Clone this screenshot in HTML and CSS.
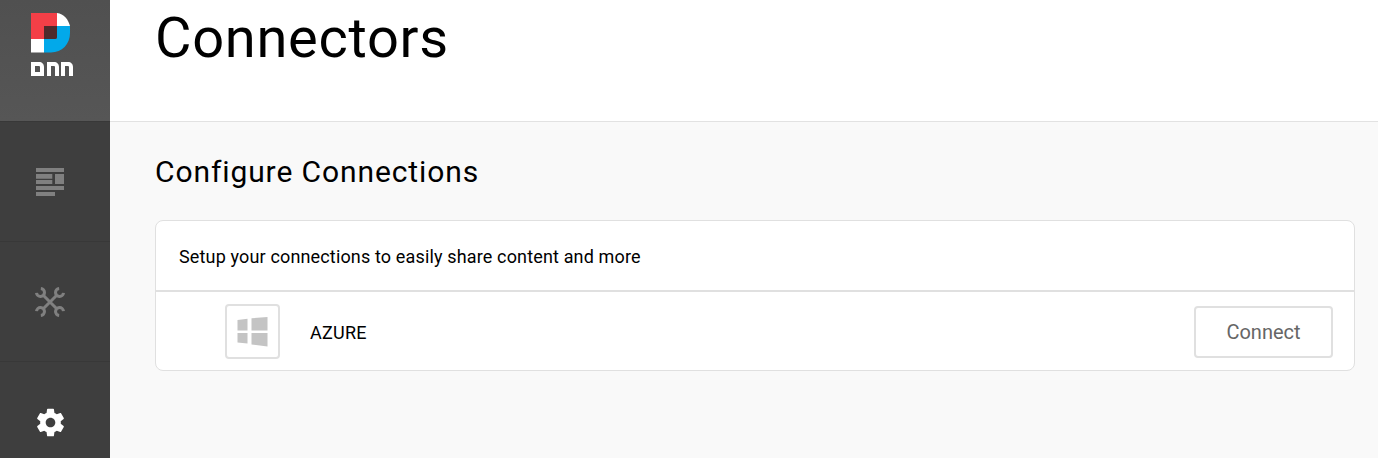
FILE: index.html
```html
<!DOCTYPE html>
<html lang="en">
<head>
<meta charset="utf-8">
<title>Connectors</title>
<link rel="stylesheet" href="styles.css">
</head>
<body>
<div class="app">
  <nav class="sidebar">
    <div class="logo">
      <svg class="logo-mark" width="39" height="40" viewBox="0 0 39 40">
        <path d="M0 0H26V13H13V26H0Z" fill="#f33f47"/>
        <path d="M26 0C33 1 37 6 39 13H26Z" fill="#fff"/>
        <path d="M0 26H13V39.5H0Z" fill="#fff"/>
        <path d="M13 39.5V26H24Q26 26 26 24V13H39V20C39 31 31 39.5 20 39.5Z" fill="#02a9ea"/>
        <path d="M13 13H26V24Q26 26 24 26H13Z" fill="#4e2a2c"/>
      </svg>
      <svg class="logo-word" width="42" height="14" viewBox="0 0 42 14">
        <path fill="#fff" fill-rule="evenodd" d="M0 0H8C11 0 13 2 13 5V14H0ZM4 4V10H9V5Q9 4 8 4Z"/>
        <path fill="#fff" d="M16 14V0H23C26 0 28 2 28 5V14H24V5Q24 4 23 4H20V14Z"/>
        <path fill="#fff" d="M30 14V0H37C40 0 42 2 42 5V14H38V5Q38 4 37 4H34V14Z"/>
      </svg>
    </div>
    <div class="nav-item">
      <svg width="28" height="28" viewBox="0 0 28 28" fill="#808080">
        <path d="M0 0H28V4H0ZM0 6H16.3V10.700H0ZM19 6H28V16H19ZM0 12H16.300V16H0ZM0 18H28V22H0ZM0 24H19V28H0Z"/>
      </svg>
    </div>
    <div class="nav-item">
      <svg width="30" height="30" viewBox="0 0 30 30" fill="none" stroke="#808080" stroke-width="3">
        <path d="M8 8L22 22M22 8L8 22"/>
        <path d="M1.5 5.85A4 4 0 1 0 5.85 1.5"/>
        <path d="M28.5 24.15A4 4 0 1 0 24.15 28.5"/>
        <path d="M24.15 1.5A4 4 0 1 0 28.5 5.85"/>
        <path d="M5.85 28.500A4 4 0 1 0 1.5 24.15"/>
      </svg>
    </div>
    <div class="nav-item nav-item-active">
      <svg width="33" height="33" viewBox="0 0 24 24" fill="#fff">
        <path fill-rule="evenodd" d="M19.43 12.98c.04-.32.07-.64.07-.98s-.03-.66-.07-.98l2.11-1.65c.19-.15.24-.42.12-.64l-2-3.46c-.12-.22-.39-.3-.61-.22l-2.49 1c-.52-.4-1.08-.73-1.69-.98l-.38-2.65C14.46 2.18 14.25 2 14 2h-4c-.25 0-.46.18-.49.42l-.38 2.65c-.61.25-1.17.59-1.69.98l-2.49-1c-.23-.09-.49 0-.61.22l-2 3.46c-.13.22-.07.49.12.64l2.11 1.65c-.04.32-.07.65-.07.98s.03.66.07.98l-2.11 1.65c-.19.15-.24.42-.12.64l2 3.46c.12.22.39.3.61.22l2.49-1c.52.4 1.08.73 1.69.98l.38 2.65c.03.24.24.42.49.42h4c.25 0 .46-.18.49-.42l.38-2.65c.61-.25 1.17-.59 1.69-.98l2.49 1c.23.09.49 0 .61-.22l2-3.46c.12-.22.07-.49-.12-.64l-2.11-1.65zM12 15.5c-1.93 0-3.5-1.57-3.5-3.5s1.57-3.5 3.5-3.5 3.5 1.57 3.5 3.5-1.57 3.5-3.5 3.5z"/>
      </svg>
    </div>
  </nav>
  <div class="main">
    <header class="page-header">
      <h1 class="page-title">Connectors</h1>
    </header>
    <section class="content">
      <h2 class="section-title">Configure Connections</h2>
      <div class="card">
        <div class="card-intro">Setup your connections to easily share content and more</div>
        <div class="connector">
          <div class="connector-icon">
            <svg width="32" height="30" viewBox="0 0 32 30" fill="#c4c4c4">
              <path d="M0.5 3L10.500 1.800V13.500H0.5ZM14.500 1.300L30.500 0V13.500H14.500ZM0.5 16H10.500V26.500L0.5 25.500ZM14.500 16H30.500V29.500L14.500 27.500Z"/>
            </svg>
          </div>
          <div class="connector-name">AZURE</div>
          <button class="connect-button">Connect</button>
        </div>
      </div>
    </section>
  </div>
</div>
</body>
</html>
```

FILE: styles.css
```css
* {
  box-sizing: border-box;
}

html,
body {
  margin: 0;
  height: 100%;
  overflow: hidden;
}

body {
  font-family: Roboto, "Liberation Sans", sans-serif;
  color: #000;
  background: #f9f9f9;
}

.app {
  display: flex;
  height: 458px;
}

.sidebar {
  flex: 0 0 110px;
  display: flex;
  flex-direction: column;
  background: #3e3e3e;
}

.logo {
  height: 122px;
  padding: 13px 0 0 31px;
  display: flex;
  flex-direction: column;
  align-items: flex-start;
  gap: 9px;
  background: linear-gradient(#505050, #565656);
  border-bottom: 1px solid #383838;
}

.nav-item {
  height: 120px;
  flex: none;
  display: flex;
  align-items: center;
  justify-content: center;
  padding-right: 10px;
  border-bottom: 1px solid #383838;
}

.nav-item-active {
  border-bottom: 0;
  flex: 1;
  height: auto;
  padding-top: 24px;
}

.main {
  flex: 1;
  display: flex;
  flex-direction: column;
  min-width: 0;
}

.page-header {
  height: 122px;
  padding-left: 45px;
  background: #fff;
  border-bottom: 1px solid #e2e2e2;
}

.page-title {
  margin: 0;
  font-size: 56px;
  font-weight: 400;
  line-height: 76px;
  letter-spacing: 0.7px;
}

.content {
  padding: 33px 23px 0 45px;
}

.section-title {
  margin: 0 0 31px;
  font-size: 30px;
  font-weight: 400;
  line-height: 34px;
  letter-spacing: 0.9px;
}

.card {
  height: 151px;
  background: #fff;
  border: 1px solid #e0e0e0;
  border-radius: 8px;
}

.card-intro {
  height: 71px;
  padding-left: 23px;
  font-size: 18px;
  line-height: 71px;
  letter-spacing: 0.15px;
  border-bottom: 2px solid #e0e0e0;
}

.connector {
  display: flex;
  align-items: center;
  height: 78px;
  padding: 1px 21px 0 69px;
}

.connector-icon {
  width: 55px;
  height: 55px;
  display: flex;
  align-items: center;
  justify-content: center;
  border: 2px solid #e0e0e0;
  border-radius: 4px;
}

.connector-name {
  flex: 1;
  margin-left: 30px;
  padding-top: 2px;
  font-size: 18px;
  letter-spacing: 0.25px;
}

.connect-button {
  width: 139px;
  height: 52px;
  padding: 0;
  font-family: inherit;
  font-size: 20px;
  color: #666;
  background: #fff;
  border: 2px solid #e0e0e0;
  border-radius: 4px;
}
```
